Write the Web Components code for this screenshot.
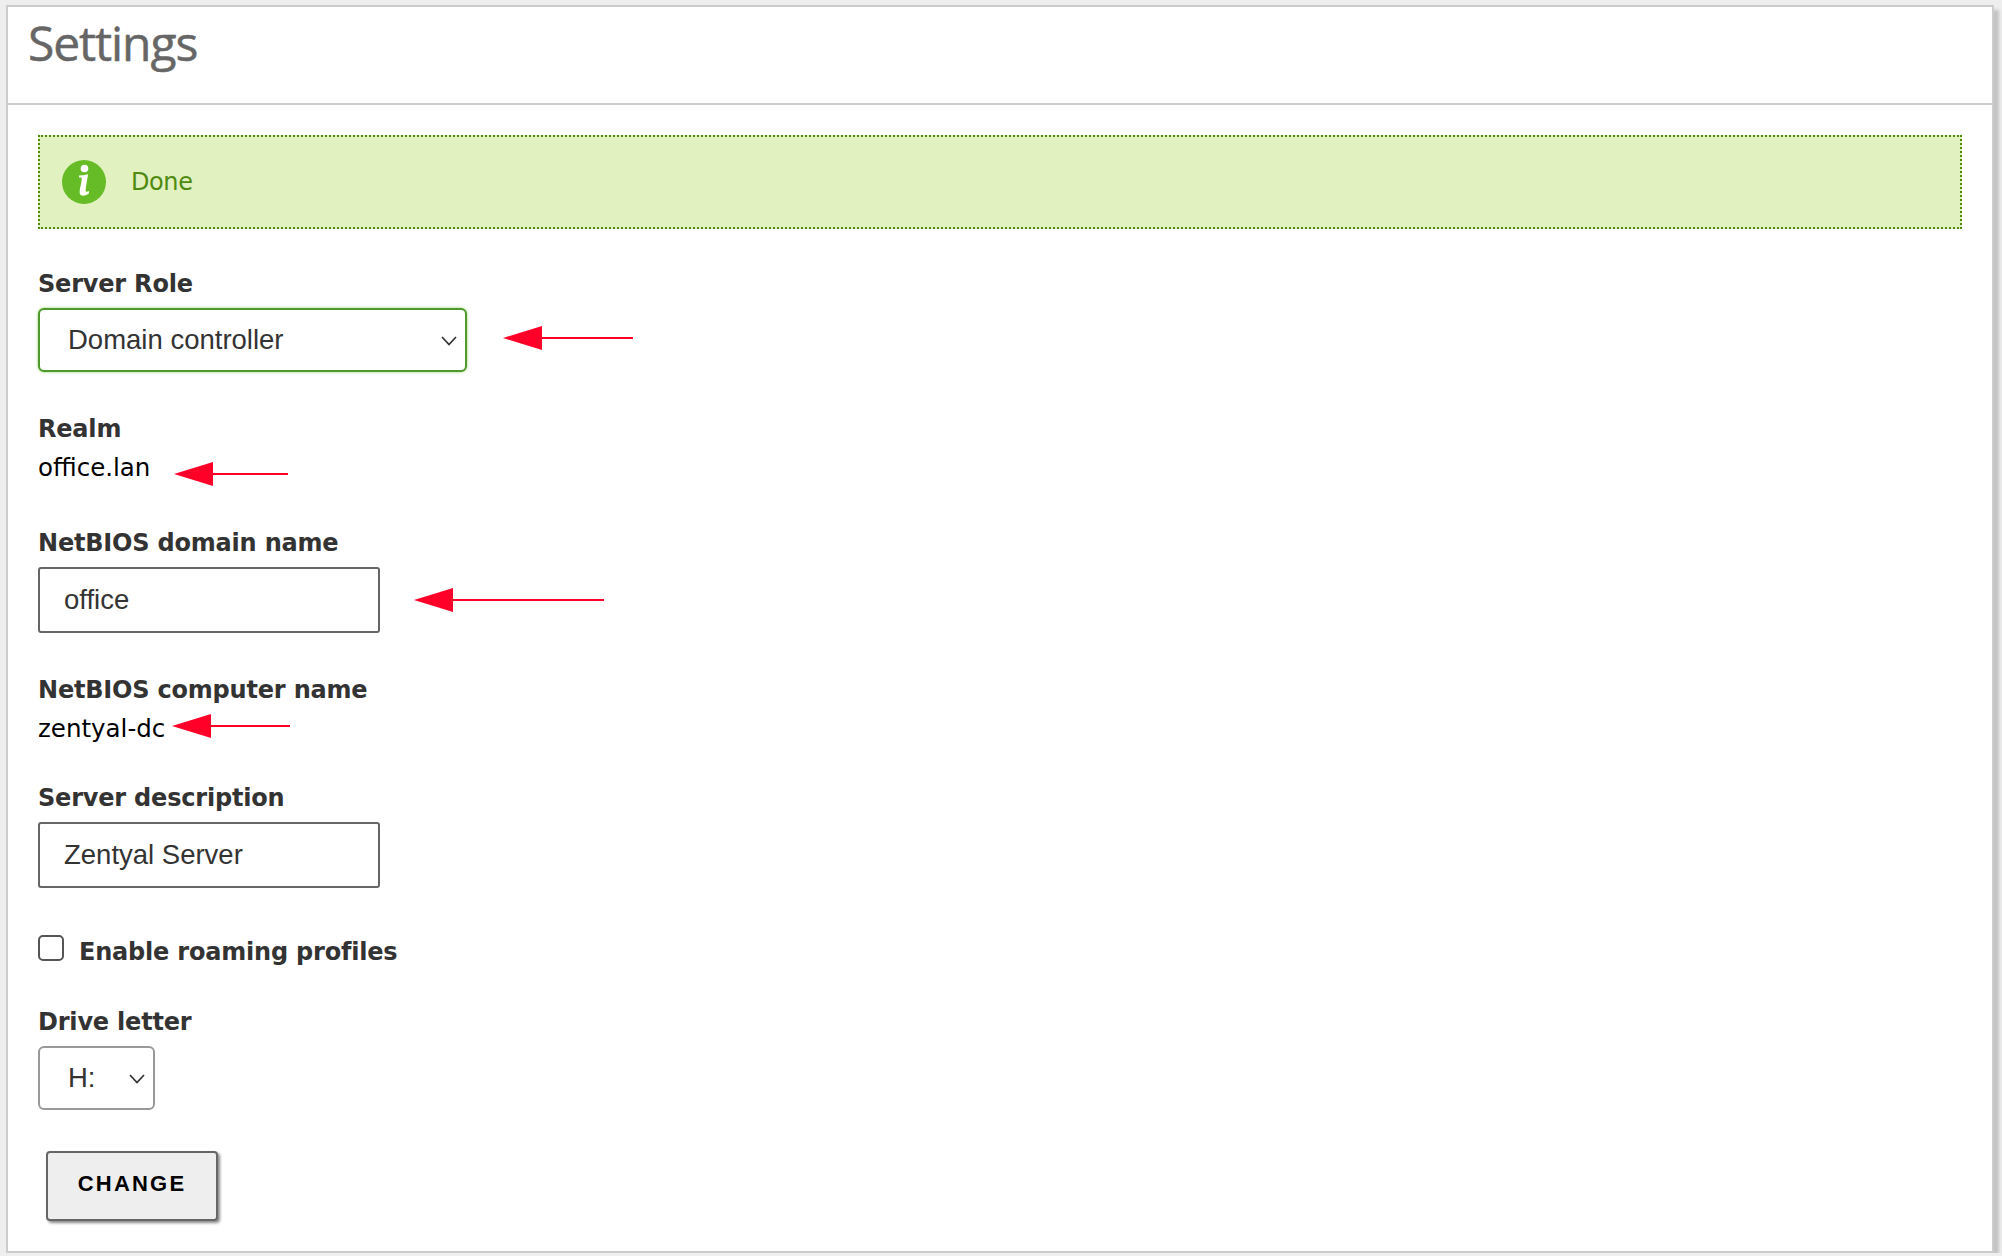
<!DOCTYPE html>
<html lang="en">
<head>
<meta charset="utf-8">
<title>Settings</title>
<style>
    html, body { margin: 0; background-color: #eeeeee; }
</style>
</head>
<body>
<settings-panel heading="Settings">
    <notice-box>Done</notice-box>

    <settings-field label="Server Role">
        <select-box width="429" tone="focus">Domain controller</select-box>
        <red-arrow length="130" gap="36" lift="4"></red-arrow>
    </settings-field>

    <settings-field label="Realm" compact>
        <static-value>office.lan</static-value>
        <red-arrow length="114" gap="24" drop="9"></red-arrow>
    </settings-field>

    <settings-field label="NetBIOS domain name">
        <text-box>office</text-box>
        <red-arrow length="190" gap="34"></red-arrow>
    </settings-field>

    <settings-field label="NetBIOS computer name" compact>
        <static-value>zentyal-dc</static-value>
        <red-arrow length="118" gap="7"></red-arrow>
    </settings-field>

    <settings-field label="Server description" spaced>
        <text-box>Zentyal Server</text-box>
    </settings-field>

    <check-row>Enable roaming profiles</check-row>

    <settings-field label="Drive letter" tight>
        <select-box width="117">H:</select-box>
    </settings-field>

    <action-button>CHANGE</action-button>
</settings-panel>

<script>
class SettingsPanel extends HTMLElement {
    constructor() {
        super();
        this.shadowDOM = this.attachShadow({ mode: 'open' });
    }

    connectedCallback() {
        this.shadowDOM.innerHTML = `
        <style>
            :host {
                display: block;
                box-sizing: border-box;
                width: 1988px;
                margin: 5px 0 0 6px;
                background-color: #ffffff;
                border: 2px solid #cccccc;
                box-shadow: 5px 5px 3px #c4c4c4;
            }
            h1 {
                box-sizing: border-box;
                height: 98px;
                margin: 0;
                padding: 0 0 0 20px;
                border-bottom: 2px solid #cccccc;
                font: 400 48px/72px "Open Sans", sans-serif;
                letter-spacing: -1.1px;
                color: #666666;
                -webkit-text-stroke: 0.5px #666666;
            }
            .content {
                padding: 30px;
            }
        </style>
        <h1>${this.getAttribute('heading')}</h1>
        <div class="content"><slot></slot></div>
        `;
    }
}

class NoticeBox extends HTMLElement {
    constructor() {
        super();
        this.shadowDOM = this.attachShadow({ mode: 'open' });
    }

    connectedCallback() {
        this.shadowDOM.innerHTML = `
        <style>
            :host {
                display: flex;
                align-items: center;
                gap: 25px;
                box-sizing: border-box;
                height: 94px;
                margin-bottom: 40px;
                padding-left: 22px;
                background-color: #e1f1c0;
                border: 2px dotted #4f8a10;
                font: 24px/30px "DejaVu Sans", sans-serif;
                letter-spacing: -0.4px;
                color: #4f8a10;
            }
            svg { display: block; }
        </style>
        <svg width="44" height="44" viewBox="0 0 44 44">
            <circle cx="22" cy="22" r="22" fill="#66bc27"/>
            <circle cx="22.5" cy="8.5" r="3.8" fill="#ffffff"/>
            <path d="M17 15.5 C20 15.5 23 15 26 14.2 C25.2 20 24.2 25 23.6 30 C23.4 32 24.6 32.4 27 31 L27 33.5 C24 36 17.4 37.4 17.6 32 C17.8 27 19.6 23 19.8 18.4 C19.8 17.4 18.4 17.4 17 17.6 Z" fill="#ffffff"/>
        </svg>
        <slot></slot>
        `;
    }
}

class SettingsField extends HTMLElement {
    constructor() {
        super();
        this.shadowDOM = this.attachShadow({ mode: 'open' });
    }

    connectedCallback() {
        this.shadowDOM.innerHTML = `
        <style>
            :host {
                display: block;
                margin-bottom: 42px;
            }
            :host([spaced]) { margin-bottom: 47px; }
            :host([tight]) { margin-bottom: 41px; }
            .label {
                height: 30px;
                margin-bottom: 9px;
                font: 700 24px/30px "DejaVu Sans", sans-serif;
                letter-spacing: -0.2px;
                color: #333333;
            }
            .control {
                display: flex;
                align-items: flex-start;
            }
        </style>
        <div class="label">${this.getAttribute('label')}</div>
        <div class="control"><slot></slot></div>
        `;
    }
}

class StaticValue extends HTMLElement {
    constructor() {
        super();
        this.shadowDOM = this.attachShadow({ mode: 'open' });
    }

    connectedCallback() {
        this.shadowDOM.innerHTML = `
        <style>
            :host {
                display: block;
                height: 27px;
                font: 24.5px/29px "DejaVu Sans", sans-serif;
                color: #000000;
            }
        </style>
        <slot></slot>
        `;
    }
}

class TextBox extends HTMLElement {
    constructor() {
        super();
        this.shadowDOM = this.attachShadow({ mode: 'open' });
    }

    connectedCallback() {
        this.shadowDOM.innerHTML = `
        <style>
            :host {
                display: block;
                box-sizing: border-box;
                width: 342px;
                height: 66px;
                padding-left: 24px;
                background-color: #ffffff;
                border: 2px solid #666666;
                border-radius: 3px;
                font: 27.5px/62px "Liberation Sans", Arial, sans-serif;
                color: #333333;
            }
        </style>
        <slot></slot>
        `;
    }
}

class SelectBox extends HTMLElement {
    constructor() {
        super();
        this.shadowDOM = this.attachShadow({ mode: 'open' });
    }

    connectedCallback() {
        this.shadowDOM.innerHTML = `
        <style>
            :host {
                display: flex;
                align-items: center;
                justify-content: space-between;
                box-sizing: border-box;
                height: 64px;
                padding: 0 8px 0 28px;
                background-color: #ffffff;
                border: 2px solid #999999;
                border-radius: 6px;
                font: 27.5px/60px "Liberation Sans", Arial, sans-serif;
                color: #333333;
            }
            :host([tone="focus"]) {
                border-color: #4f9a2c;
                box-shadow: 0 0 3px #8fd067;
            }
            svg { display: block; margin-top: 2px; }
        </style>
        <span><slot></slot></span>
        <svg width="16" height="10" viewBox="0 0 16 10">
            <path d="M1 1 L8 8.5 L15 1" fill="none" stroke="#333333" stroke-width="1.7"/>
        </svg>
        `;
        this.style.width = this.getAttribute('width') + 'px';
    }
}

class RedArrow extends HTMLElement {
    constructor() {
        super();
        this.shadowDOM = this.attachShadow({ mode: 'open' });
    }

    connectedCallback() {
        const length = Number(this.getAttribute('length'));
        this.shadowDOM.innerHTML = `
        <style>
            :host {
                display: block;
                height: 24px;
            }
            svg { display: block; }
        </style>
        <svg width="${length}" height="24" viewBox="0 0 ${length} 24">
            <polygon points="0,12 39,0 39,24" fill="#ff0028"/>
            <rect x="39" y="11" width="${length - 39}" height="2" fill="#ff0028"/>
        </svg>
        `;
        this.style.marginLeft = (this.getAttribute('gap') || 0) + 'px';
        this.style.marginTop = (this.getAttribute('drop') || 0) + 'px';
        if (this.hasAttribute('lift')) {
            this.style.alignSelf = 'center';
            this.style.marginBottom = this.getAttribute('lift') + 'px';
        }
        if (!this.hasAttribute('lift') && !this.hasAttribute('drop') && this.getAttribute('gap') === '34') {
            this.style.alignSelf = 'center';
        }
    }
}

class CheckRow extends HTMLElement {
    constructor() {
        super();
        this.shadowDOM = this.attachShadow({ mode: 'open' });
    }

    connectedCallback() {
        this.shadowDOM.innerHTML = `
        <style>
            :host {
                display: flex;
                gap: 15px;
                height: 26px;
                margin-bottom: 46px;
                font: 700 24px/34px "DejaVu Sans", sans-serif;
                letter-spacing: -0.2px;
                color: #333333;
            }
            .box {
                box-sizing: border-box;
                width: 26px;
                height: 26px;
                background-color: #ffffff;
                border: 2px solid #555555;
                border-radius: 5px;
            }
        </style>
        <div class="box"></div>
        <span><slot></slot></span>
        `;
    }
}

class ActionButton extends HTMLElement {
    constructor() {
        super();
        this.shadowDOM = this.attachShadow({ mode: 'open' });
    }

    connectedCallback() {
        this.shadowDOM.innerHTML = `
        <style>
            :host {
                display: block;
                box-sizing: border-box;
                width: 172px;
                height: 70px;
                margin-left: 8px;
                background-color: #eeeeee;
                border: 2px solid #666666;
                border-radius: 4px;
                box-shadow: 2px 2px 3px #888888;
                font: 700 22px/62px "Liberation Sans", Arial, sans-serif;
                letter-spacing: 2.2px;
                text-align: center;
                color: #000000;
            }
        </style>
        <slot></slot>
        `;
    }
}

customElements.define('settings-panel', SettingsPanel);
customElements.define('notice-box', NoticeBox);
customElements.define('settings-field', SettingsField);
customElements.define('static-value', StaticValue);
customElements.define('text-box', TextBox);
customElements.define('select-box', SelectBox);
customElements.define('red-arrow', RedArrow);
customElements.define('check-row', CheckRow);
customElements.define('action-button', ActionButton);
</script>
</body>
</html>
